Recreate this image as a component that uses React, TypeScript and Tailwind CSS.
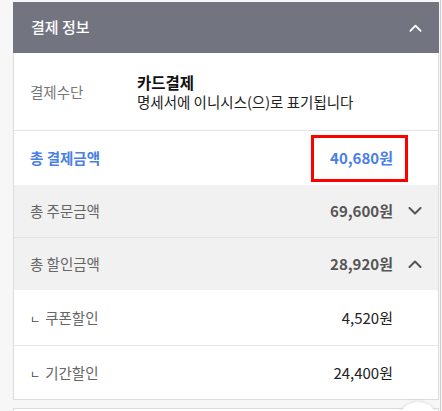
const Chevron = ({ up, className }: { up?: boolean; className?: string }) => (
  <svg viewBox="0 0 14 8" className={className} fill="none" stroke="currentColor" strokeWidth={2} strokeLinecap="round" strokeLinejoin="round">
    {up ? <path d="M1.5 7L7 1.5L12.5 7" /> : <path d="M1.5 1L7 6.5L12.5 1" />}
  </svg>
);

const AmountRow = ({
  label,
  amount,
  rowClass,
  labelClass,
  amountClass,
  chevron,
  boxed,
}: {
  label: React.ReactNode;
  amount: string;
  rowClass: string;
  labelClass: string;
  amountClass: string;
  chevron?: 'up' | 'down';
  boxed?: boolean;
}) => {
  return (
    <div className={`flex items-center justify-between pl-4 pr-[16px] ${rowClass}`}>
      <span className={`text-[14.5px] ${labelClass}`}>{label}</span>
      <div className="flex items-center gap-[15px]">
        <span className={`relative text-[15px] leading-[22px] ${amountClass}`}>
          {amount.replace('원', '')}
          <span className="text-[15px]">원</span>
          {boxed && (
            <span className="absolute left-[-19px] right-[-15px] top-[-12px] bottom-[-13px] border-[3px] border-[#ff0000]" />
          )}
        </span>
        <span className="w-[14px] flex justify-center text-[#555]">
          {chevron && <Chevron up={chevron === 'up'} className="w-[14px] h-[8px]" />}
        </span>
      </div>
    </div>
  );
};

export default function App() {
  return (
    <div
      className="relative w-[442px] h-[411px] overflow-hidden bg-[#f7f7f7] pl-[13px] pr-[3px] pt-[2px]"
      style={{ fontFamily: '"Noto Sans CJK KR", "Noto Sans", sans-serif' }}
    >
      <div className="absolute top-0 bottom-0 right-[1px] w-px bg-[#cfcfcf]" />
      <div className="border border-t-0 border-[#dcdcdc] bg-white">
        <header className="flex items-center justify-between h-[51px] bg-[#72747f] pl-[18px] pr-[17px] -mx-px">
          <h2 className="text-[15px] font-medium text-white">결제 정보</h2>
          <Chevron up className="w-[13px] h-[8px] text-white" />
        </header>

        <div className="flex items-center h-[78px] border-b border-[#e3e3e3] pl-4 pr-4">
          <span className="w-[107px] text-[14.5px] text-[#777]">결제수단</span>
          <div className="flex flex-col leading-[20px]">
            <span className="text-[15.5px] font-bold text-[#111]">카드결제</span>
            <span className="text-[14.5px] text-[#222]">명세서에 이니시스(으)로 표기됩니다</span>
          </div>
        </div>

        <AmountRow
          label="총 결제금액"
          amount="40,680원"
          rowClass="h-[54px] bg-white"
          labelClass="font-bold text-[#4a7fe3]"
          amountClass="font-bold text-[#4a7fe3]"
          boxed
        />
        <AmountRow
          label="총 주문금액"
          amount="69,600원"
          rowClass="h-[53px] bg-[#f1f1f1] border-b border-[#e4e4e4]"
          labelClass="text-[#666]"
          amountClass="font-bold text-[#555]"
          chevron="down"
        />
        <AmountRow
          label="총 할인금액"
          amount="28,920원"
          rowClass="h-[52px] bg-[#f1f1f1]"
          labelClass="text-[#666]"
          amountClass="font-bold text-[#555]"
          chevron="up"
        />
        <AmountRow
          label={<><span className="text-[11px] mr-[5px] text-[#444]">ㄴ</span>쿠폰할인</>}
          amount="4,520원"
          rowClass="h-[56px] bg-white border-b border-[#e8e8e8]"
          labelClass="text-[#666]"
          amountClass="text-[#222]"
        />
        <AmountRow
          label={<><span className="text-[11px] mr-[5px] text-[#444]">ㄴ</span>기간할인</>}
          amount="24,400원"
          rowClass="h-[53px] bg-white"
          labelClass="text-[#666]"
          amountClass="text-[#222]"
        />
      </div>

      <div className="mt-[8px] h-[40px] border border-[#dcdcdc] bg-white" />
      <div className="absolute left-[398px] top-[402px] w-[40px] h-[40px] rounded-full bg-white shadow-[0_0_4px_rgba(0,0,0,0.12)]" />
    </div>
  );
}
